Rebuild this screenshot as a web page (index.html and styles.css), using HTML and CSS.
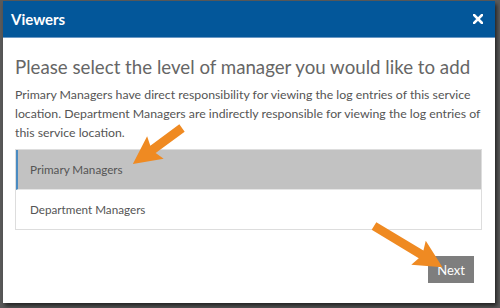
FILE: index.html
```html
<!DOCTYPE html>
<html>
<head>
<meta charset="utf-8">
<link rel="stylesheet" href="styles.css">
</head>
<body>
<div class="modal">
  <div class="modal-header">
    <span class="modal-title">Viewers</span>
    <button class="close" aria-label="Close">
      <svg width="10" height="10" viewBox="0 0 10 10"><path d="M1 1 L9 9 M9 1 L1 9" stroke="#fff" stroke-width="2.6" stroke-linecap="square"/></svg>
    </button>
  </div>
  <div class="modal-body">
    <h2 class="heading">Please select the level of manager you would like to add</h2>
    <p class="desc">Primary Managers have direct responsibility for viewing the log entries of this service location. Department Managers are indirectly responsible for viewing the log entries of this service location.</p>
    <ul class="list">
      <li class="item active">Primary Managers</li>
      <li class="item">Department Managers</li>
    </ul>
    <div class="footer">
      <button class="btn-next">Next</button>
    </div>
  </div>
</div>
<svg class="annot" width="500" height="308" viewBox="0 0 500 308">
  <g transform="translate(182 128) rotate(143.7)">
    <path d="M0 -4.5 L36 -4.5 L33 -14 L61 0 L33 14 L36 4.5 L0 4.5 Z" fill="#EF8A22"/>
  </g>
  <g transform="translate(374 226) rotate(31.1)">
    <path d="M0 -4.5 L55 -4.5 L52 -14 L80 0 L52 14 L55 4.5 L0 4.5 Z" fill="#EF8A22"/>
  </g>
</svg>
</body>
</html>
```

FILE: styles.css
```css
html, body {
  margin: 0;
  padding: 0;
}
body {
  width: 500px;
  height: 308px;
  background: #5a5a5a;
  overflow: hidden;
  position: relative;
  font-family: Lato, "Open Sans", sans-serif;
}
.modal {
  margin: 1px 0 0 3px;
  width: 492px;
  height: 302px;
  background: #fff;
  box-shadow: 2px 3px 4px rgba(0,0,0,0.6);
  display: flex;
  flex-direction: column;
}
.modal-header {
  height: 36px;
  background: #03579a;
  border-bottom: 1px solid #6a98c4;
  display: flex;
  align-items: center;
  justify-content: space-between;
  padding: 0 12px 0 8px;
}
.modal-title {
  color: #fff;
  font-weight: bold;
  font-size: 15px;
  margin-top: -1px;
}
.close {
  background: none;
  border: 0;
  padding: 0;
  width: 10px;
  height: 10px;
  display: flex;
}
.modal-body {
  padding: 0 12px;
  flex: 1;
  display: flex;
  flex-direction: column;
}
.heading {
  margin: 17px 0 0;
  font-size: 18.7px;
  font-weight: normal;
  line-height: 24px;
  color: #666;
}
.desc {
  margin: 6px 0 0;
  font-size: 12.3px;
  line-height: 19px;
  color: #555;
}
.list {
  list-style: none;
  margin: 7px 0 0;
  padding: 0;
  border: 1px solid #ddd;
  width: 465px;
}
.item {
  height: 39px;
  line-height: 39px;
  padding-left: 14px;
  font-size: 11.7px;
  color: #555;
  background: #fff;
}
.item.active {
  background: #c2c2c2;
  border-left: 2px solid #4a8bc2;
  padding-left: 12px;
  border-bottom: 1px solid #e6e6e6;
}
.footer {
  display: flex;
  justify-content: flex-end;
  padding-right: 9px;
  margin-top: 26px;
}
.btn-next {
  width: 46px;
  height: 27px;
  background: #7e7e7e;
  border: 0;
  color: #fff;
  font-family: Lato, sans-serif;
  font-size: 13px;
  padding: 0;
}
.annot {
  position: absolute;
  left: 0;
  top: 0;
  pointer-events: none;
}
```
